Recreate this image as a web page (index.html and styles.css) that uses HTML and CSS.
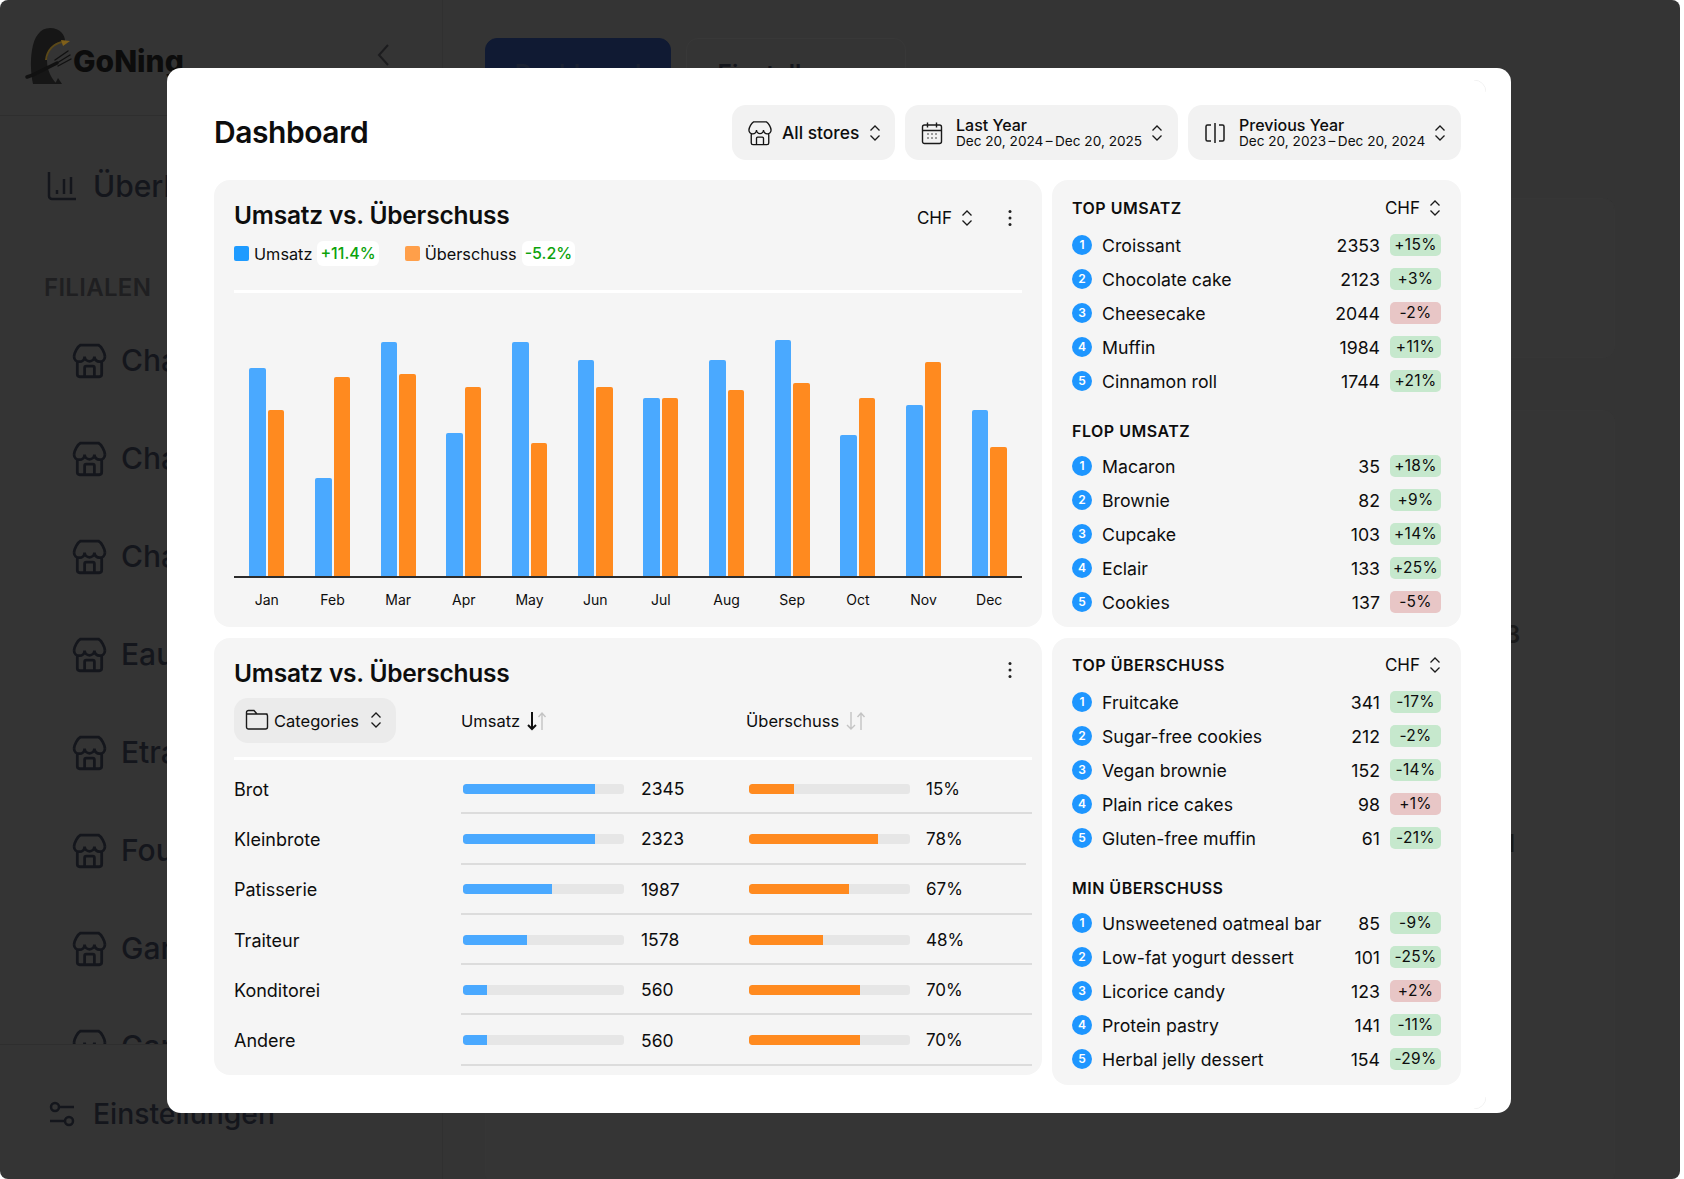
FILE: index.html
```html
<!DOCTYPE html>
<html lang="de">
<head>
<meta charset="utf-8">
<title>GoNing Dashboard</title>
<link rel="stylesheet" href="styles.css">
</head>
<body>
<svg class="defs" width="0" height="0" aria-hidden="true">
  <symbol id="store" viewBox="0 0 24 24"><path d="M2.5 9.5C2.7 7 4.6 3.5 6.5 2.5h11c1.900 1 3.800 4.500 4 7M2.500 9.500a3.170 3.170 0 0 0 6.500 0a3 3 0 0 0 6 0a3.170 3.170 0 0 0 6.500 0M4.500 13v7.500a1.500 1.500 0 0 0 1.500 1.500h12a1.500 1.500 0 0 0 1.500-1.500V13M9 22v-5.500a1 1 0 0 1 1-1h4a1 1 0 0 1 1 1V22"/></symbol>
  <symbol id="updown" viewBox="0 0 12 20"><path d="M1.500 7.500L6 3l4.500 4.500M1.500 12.500L6 17l4.500-4.500"/></symbol>
  <symbol id="dots" viewBox="0 0 6 20"><circle cx="3" cy="3.500" r="1.500"/><circle cx="3" cy="10" r="1.500"/><circle cx="3" cy="16.500" r="1.500"/></symbol>
</svg>

<div class="app">
  <aside class="sidebar">
    <div class="brand">
      <svg class="penguin" viewBox="0 0 50 56" width="50" height="56" aria-hidden="true">
        <path class="pg-body" d="M27 0C37 0 42 7 42 13C33 13 24 20 24 32C24 42 28 50 34 56H10C8 46 7 34 9 22C11 9 17 0 27 0Z"/>
        <path class="pg-tan" d="M40 14C31 15 24 22 23 32"/>
        <path class="pg-beak" d="M38 12L47 13L40 18Z"/>
        <path class="pg-fork" d="M4 49L10 47L34 35"/>
        <path class="pg-tines" d="M34 35L47 27M35 38L48 31M32 32L45 23"/>
        <path class="pg-foot" d="M35 50L39 56H32Z"/>
      </svg>
      <span class="brand-name">GoNing</span>
      <svg class="collapse" viewBox="0 0 14 24" width="14" height="24" aria-hidden="true"><path d="M12 2L3 12l9 10"/></svg>
    </div>
    <nav class="nav">
      <div class="nav-top">
        <svg class="nav-chart" viewBox="0 0 30 30" width="30" height="30" aria-hidden="true"><path d="M2 1v24a3 3 0 0 0 3 3h24M10 19v4M17 8v15M24 6v17"/></svg>
        <span>Überblick</span>
      </div>
      <div class="nav-label">FILIALEN</div>
      <div class="nav-item"><svg class="ico-store"><use href="#store"/></svg><span>Chalet</span></div>
      <div class="nav-item"><svg class="ico-store"><use href="#store"/></svg><span>Chalet</span></div>
      <div class="nav-item"><svg class="ico-store"><use href="#store"/></svg><span>Chalet</span></div>
      <div class="nav-item"><svg class="ico-store"><use href="#store"/></svg><span>Eaux</span></div>
      <div class="nav-item"><svg class="ico-store"><use href="#store"/></svg><span>Etrat</span></div>
      <div class="nav-item"><svg class="ico-store"><use href="#store"/></svg><span>Foug</span></div>
      <div class="nav-item"><svg class="ico-store"><use href="#store"/></svg><span>Gare</span></div>
      <div class="nav-item"><svg class="ico-store"><use href="#store"/></svg><span>Gare</span></div>
    </nav>
    <div class="side-foot">
      <svg class="foot-ico" viewBox="0 0 28 28" width="28" height="28" aria-hidden="true"><circle cx="7" cy="7" r="4"/><path d="M11 7h15M2 21h15"/><circle cx="21" cy="21" r="4"/></svg>
      <span>Einstellungen</span>
    </div>
  </aside>

  <main class="back">
    <div class="tabs">
      <div class="tab tab-on">Dashboard</div>
      <div class="tab">Einstellungen</div>
    </div>
    <div class="back-panel back-panel-a"></div>
    <div class="back-panel back-panel-b"><span class="back-num">3</span><span class="back-num">1</span></div>
  </main>
</div>

<section class="modal">
  <svg class="corner corner-t" viewBox="0 0 12 12" width="12" height="12" aria-hidden="true"><path d="M0 0a12 12 0 0 1 12 12"/></svg>
  <svg class="corner corner-b" viewBox="0 0 12 12" width="12" height="12" aria-hidden="true"><path d="M12 0a12 12 0 0 1-12 12"/></svg>

  <header class="modal-head">
    <h1 class="modal-title">Dashboard</h1>
    <div class="filters">
      <button class="pill pill-store">
        <svg class="ico-head"><use href="#store"/></svg>
        <span class="pill-one">All stores</span>
        <svg class="ico-ud"><use href="#updown"/></svg>
      </button>
      <button class="pill pill-range">
        <svg class="ico-cal" viewBox="0 0 22 24" aria-hidden="true"><rect x="1.500" y="4" width="19" height="18.500" rx="2"/><path class="thin" d="M1.500 9.500h19M6.500 1.500v5M15.500 1.500v5"/><path class="dotted" d="M7 13h.01M11 13h.01M15 13h.01M7 17h.01M11 17h.01M15 17h.01"/></svg>
        <span class="pill-two"><b>Last Year</b><small>Dec 20, 2024&thinsp;–&thinsp;Dec 20, 2025</small></span>
        <svg class="ico-ud"><use href="#updown"/></svg>
      </button>
      <button class="pill pill-range">
        <svg class="ico-cmp" viewBox="0 0 22 24" aria-hidden="true"><path d="M7 4H3.500a1.500 1.500 0 0 0-1.500 1.500v13A1.500 1.500 0 0 0 3.500 20H7M15 4h3.500A1.500 1.500 0 0 1 20 5.500v13a1.500 1.500 0 0 1-1.500 1.500H15M11 2v20"/></svg>
        <span class="pill-two"><b>Previous Year</b><small>Dec 20, 2023&thinsp;–&thinsp;Dec 20, 2024</small></span>
        <svg class="ico-ud"><use href="#updown"/></svg>
      </button>
    </div>
  </header>

  <div class="grid">
    <div class="col-left">
      <article class="card card-chart">
        <div class="card-top">
          <h2 class="card-title">Umsatz vs. Überschuss</h2>
          <div class="card-tools">
            <span class="chf">CHF <svg class="ico-ud"><use href="#updown"/></svg></span>
            <svg class="ico-dots"><use href="#dots"/></svg>
          </div>
        </div>
        <div class="legend">
          <span class="swatch swatch-b"></span><span>Umsatz</span><span class="delta">+11.4%</span>
          <span class="swatch swatch-o"></span><span>Überschuss</span><span class="delta">-5.2%</span>
        </div>
        <div class="chart" id="chart">
          <div class="group"><i class="bar b" style="height:208px"></i><i class="bar o" style="height:166px"></i></div>
          <div class="group"><i class="bar b" style="height:98px"></i><i class="bar o" style="height:199px"></i></div>
          <div class="group"><i class="bar b" style="height:234px"></i><i class="bar o" style="height:202px"></i></div>
          <div class="group"><i class="bar b" style="height:143px"></i><i class="bar o" style="height:189px"></i></div>
          <div class="group"><i class="bar b" style="height:234px"></i><i class="bar o" style="height:133px"></i></div>
          <div class="group"><i class="bar b" style="height:216px"></i><i class="bar o" style="height:189px"></i></div>
          <div class="group"><i class="bar b" style="height:178px"></i><i class="bar o" style="height:178px"></i></div>
          <div class="group"><i class="bar b" style="height:216px"></i><i class="bar o" style="height:186px"></i></div>
          <div class="group"><i class="bar b" style="height:236px"></i><i class="bar o" style="height:193px"></i></div>
          <div class="group"><i class="bar b" style="height:141px"></i><i class="bar o" style="height:178px"></i></div>
          <div class="group"><i class="bar b" style="height:171px"></i><i class="bar o" style="height:214px"></i></div>
          <div class="group"><i class="bar b" style="height:166px"></i><i class="bar o" style="height:129px"></i></div>
        </div>
        <div class="months">
          <span>Jan</span><span>Feb</span><span>Mar</span><span>Apr</span><span>May</span><span>Jun</span><span>Jul</span><span>Aug</span><span>Sep</span><span>Oct</span><span>Nov</span><span>Dec</span>
        </div>
      </article>

      <article class="card card-table">
        <div class="card-top card-top-table">
          <h2 class="card-title">Umsatz vs. Überschuss</h2>
          <svg class="ico-dots"><use href="#dots"/></svg>
        </div>
        <div class="t-head">
          <div class="t-first">
            <button class="pill-cat">
              <svg class="ico-folder" viewBox="0 0 24 22" aria-hidden="true"><path d="M1.500 5V3.500A2 2 0 0 1 3.500 1.500h5.500l3 3.500h8.500a2 2 0 0 1 2 2v11a2 2 0 0 1-2 2h-17a2 2 0 0 1-2-2V5h21"/></svg>
              <span>Categories</span>
              <svg class="ico-ud"><use href="#updown"/></svg>
            </button>
          </div>
          <div class="t-col">Umsatz
            <svg class="ico-sort" viewBox="0 0 20 20" aria-hidden="true"><path class="arrow-on" d="M5 1v17M1 14l4 4 4-4"/><path class="arrow-off" d="M15 19V2M11.500 6L15 2l3.500 4"/></svg>
          </div>
          <div class="t-col">Überschuss
            <svg class="ico-sort" viewBox="0 0 20 20" aria-hidden="true"><path class="arrow-off" d="M5 1v17M1 14l4 4 4-4"/><path class="arrow-off" d="M15 19V2M11.500 6L15 2l3.500 4"/></svg>
          </div>
        </div>
        <div class="t-rows">
        <div class="t-row"><div class="t-first">Brot</div><div class="t-cells">
          <div class="t-cell"><div class="track"><div class="fill b" style="width:82%"></div></div><span>2345</span></div>
          <div class="t-cell"><div class="track"><div class="fill o" style="width:28%"></div></div><span>15%</span></div></div></div>
        <div class="t-row t-row-short"><div class="t-first">Kleinbrote</div><div class="t-cells">
          <div class="t-cell"><div class="track"><div class="fill b" style="width:82%"></div></div><span>2323</span></div>
          <div class="t-cell"><div class="track"><div class="fill o" style="width:80%"></div></div><span>78%</span></div></div></div>
        <div class="t-row"><div class="t-first">Patisserie</div><div class="t-cells">
          <div class="t-cell"><div class="track"><div class="fill b" style="width:55%"></div></div><span>1987</span></div>
          <div class="t-cell"><div class="track"><div class="fill o" style="width:62%"></div></div><span>67%</span></div></div></div>
        <div class="t-row"><div class="t-first">Traiteur</div><div class="t-cells">
          <div class="t-cell"><div class="track"><div class="fill b" style="width:40%"></div></div><span>1578</span></div>
          <div class="t-cell"><div class="track"><div class="fill o" style="width:46%"></div></div><span>48%</span></div></div></div>
        <div class="t-row"><div class="t-first">Konditorei</div><div class="t-cells">
          <div class="t-cell"><div class="track"><div class="fill b" style="width:15%"></div></div><span>560</span></div>
          <div class="t-cell"><div class="track"><div class="fill o" style="width:69%"></div></div><span>70%</span></div></div></div>
        <div class="t-row"><div class="t-first">Andere</div><div class="t-cells">
          <div class="t-cell"><div class="track"><div class="fill b" style="width:15%"></div></div><span>560</span></div>
          <div class="t-cell"><div class="track"><div class="fill o" style="width:69%"></div></div><span>70%</span></div></div></div>
        </div>
      </article>
    </div>

    <div class="col-right">
      <article class="card card-list card-list-a">
        <div class="l-head"><h3>TOP UMSATZ</h3><span class="chf">CHF <svg class="ico-ud"><use href="#updown"/></svg></span></div>
        <ol class="list">
          <li><span class="rank">1</span><span class="l-name">Croissant</span><span class="l-num">2353</span><span class="tag up">+15%</span></li>
          <li><span class="rank">2</span><span class="l-name">Chocolate cake</span><span class="l-num">2123</span><span class="tag up">+3%</span></li>
          <li><span class="rank">3</span><span class="l-name">Cheesecake</span><span class="l-num">2044</span><span class="tag dn">-2%</span></li>
          <li><span class="rank">4</span><span class="l-name">Muffin</span><span class="l-num">1984</span><span class="tag up">+11%</span></li>
          <li><span class="rank">5</span><span class="l-name">Cinnamon roll</span><span class="l-num">1744</span><span class="tag up">+21%</span></li>
        </ol>
        <div class="l-head l-head-next"><h3>FLOP UMSATZ</h3></div>
        <ol class="list">
          <li><span class="rank">1</span><span class="l-name">Macaron</span><span class="l-num">35</span><span class="tag up">+18%</span></li>
          <li><span class="rank">2</span><span class="l-name">Brownie</span><span class="l-num">82</span><span class="tag up">+9%</span></li>
          <li><span class="rank">3</span><span class="l-name">Cupcake</span><span class="l-num">103</span><span class="tag up">+14%</span></li>
          <li><span class="rank">4</span><span class="l-name">Eclair</span><span class="l-num">133</span><span class="tag up">+25%</span></li>
          <li><span class="rank">5</span><span class="l-name">Cookies</span><span class="l-num">137</span><span class="tag dn">-5%</span></li>
        </ol>
      </article>
      <article class="card card-list card-list-b">
        <div class="l-head"><h3>TOP ÜBERSCHUSS</h3><span class="chf">CHF <svg class="ico-ud"><use href="#updown"/></svg></span></div>
        <ol class="list">
          <li><span class="rank">1</span><span class="l-name">Fruitcake</span><span class="l-num">341</span><span class="tag up">-17%</span></li>
          <li><span class="rank">2</span><span class="l-name">Sugar-free cookies</span><span class="l-num">212</span><span class="tag up">-2%</span></li>
          <li><span class="rank">3</span><span class="l-name">Vegan brownie</span><span class="l-num">152</span><span class="tag up">-14%</span></li>
          <li><span class="rank">4</span><span class="l-name">Plain rice cakes</span><span class="l-num">98</span><span class="tag dn">+1%</span></li>
          <li><span class="rank">5</span><span class="l-name">Gluten-free muffin</span><span class="l-num">61</span><span class="tag up">-21%</span></li>
        </ol>
        <div class="l-head l-head-next"><h3>MIN ÜBERSCHUSS</h3></div>
        <ol class="list">
          <li><span class="rank">1</span><span class="l-name">Unsweetened oatmeal bar</span><span class="l-num">85</span><span class="tag up">-9%</span></li>
          <li><span class="rank">2</span><span class="l-name">Low-fat yogurt dessert</span><span class="l-num">101</span><span class="tag up">-25%</span></li>
          <li><span class="rank">3</span><span class="l-name">Licorice candy</span><span class="l-num">123</span><span class="tag dn">+2%</span></li>
          <li><span class="rank">4</span><span class="l-name">Protein pastry</span><span class="l-num">141</span><span class="tag up">-11%</span></li>
          <li><span class="rank">5</span><span class="l-name">Herbal jelly dessert</span><span class="l-num">154</span><span class="tag up">-29%</span></li>
        </ol>
      </article>
    </div>
  </div>
</section>
</body>
</html>
```
FILE: styles.css
```css
* { box-sizing: border-box; }
html, body { margin: 0; padding: 0; background: #fff; }
body {
  width: 1684px;
  height: 1179px;
  overflow: hidden;
  position: relative;
  font-family: "Inter", "Liberation Sans", sans-serif;
  color: #0d0d0d;
}
.defs { position: absolute; }
svg { display: block; flex: none; }
h1, h2, h3, ol { margin: 0; padding: 0; }
button { font: inherit; color: inherit; border: 0; }

/* background application */
.app {
  width: 1680px;
  height: 1179px;
  display: flex;
  background: #343434;
  border-radius: 8px;
  overflow: hidden;
  color: #14161c;
}
.sidebar {
  width: 443px;
  flex: none;
  display: flex;
  flex-direction: column;
  border-right: 1px solid #303030;
}
.brand {
  height: 116px;
  flex: none;
  display: flex;
  align-items: flex-start;
  padding: 28px 0 0 23px;
  border-bottom: 1px solid #2e2e2e;
}
.penguin { margin-right: 0; }
.pg-body { fill: #161616; }
.pg-tan { fill: none; stroke: #5a4818; stroke-width: 2; }
.pg-beak { fill: #80601a; }
.pg-fork { fill: none; stroke: #111; stroke-width: 3.500; stroke-linecap: round; }
.pg-tines { fill: none; stroke: #111; stroke-width: 1.400; stroke-linecap: round; }
.pg-foot { fill: #161616; }
.brand-name {
  font-size: 30px;
  font-weight: 800;
  line-height: 34px;
  margin-top: 16px;
  color: #0c0c0c;
}
.collapse { margin: 15px 0 0 192px; fill: none; stroke: #1c1c1e; stroke-width: 2; }
.nav { flex: 1; overflow: hidden; padding-top: 48px; }
.nav-top {
  display: flex;
  align-items: center;
  gap: 16px;
  padding-left: 47px;
  font-size: 30px;
  font-weight: 500;
  height: 44px;
}
.nav-chart { fill: none; stroke: #14161c; stroke-width: 2.500; }
.nav-label {
  margin: 64px 0 0 44px;
  font-size: 24px;
  font-weight: 600;
  color: #1f1f21;
  line-height: 32px;
  letter-spacing: .3px;
}
.nav-item {
  display: flex;
  align-items: center;
  gap: 12px;
  height: 98px;
  padding-left: 70px;
  font-size: 30px;
  font-weight: 500;
}
.nav-label + .nav-item { margin-top: 7px; }
.ico-store { width: 39px; height: 39px; fill: none; stroke: #14161c; stroke-width: 1.700; }
.side-foot {
  height: 135px;
  flex: none;
  display: flex;
  align-items: center;
  gap: 17px;
  padding: 4px 0 0 48px;
  border-top: 1px solid #2e2e2e;
  font-size: 28.300px;
  font-weight: 500;
}
.foot-ico { fill: none; stroke: #14161c; stroke-width: 2.500; }
.back { flex: 1; padding: 38px 0 0 42px; position: relative; }
.tabs { display: flex; gap: 15px; }
.tab {
  width: 220px;
  height: 60px;
  padding-top: 20px;
  text-align: center;
  font-size: 24px;
  font-weight: 600;
  border: 1px solid #383838;
  border-radius: 12px 12px 0 0;
}
.tab-on { width: 186px; background: #101a33; border-color: #101a33; color: #1a2132; }
.back-panel {
  width: 1130px;
  border: 1px solid #363636;
  border-radius: 12px;
}
.back-panel-a { height: 160px; margin-top: 100px; background: #353535; }
.back-panel-b {
  height: 775px;
  margin-top: 52px;
  background: #353535;
  position: relative;
}
.back-num { position: absolute; left: 1019px; top: 209px; font-size: 24px; font-weight: 600; color: #1a1a1a; }
.back-num + .back-num { top: 418px; }

/* modal */
.modal {
  position: absolute;
  left: 167px;
  top: 68px;
  width: 1344px;
  height: 1045px;
  background: #fff;
  border-radius: 14px;
  padding: 37px 50px 0 47px;
}
.corner { position: absolute; fill: none; stroke: #f2f2f2; stroke-width: 1; left: 1307px; }
.corner-t { top: 12px; }
.corner-b { top: 1029px; }
.modal-head { display: flex; align-items: center; justify-content: space-between; height: 55px; }
.modal-title { font-size: 30px; font-weight: 600; letter-spacing: -.45px; line-height: 36px; margin-top: -2px; }
.filters { display: flex; gap: 10px; }
.pill {
  height: 55px;
  display: flex;
  align-items: center;
  background: #f2f2f2;
  border-radius: 14px;
  padding: 0 13px 0 16px;
}
.pill-store { width: 163px; }
.pill-range { width: 273px; }
.pill-one { font-size: 17.400px; font-weight: 500; margin: 0 10px 0 8px; white-space: nowrap; }
.ico-head { width: 28px; height: 28px; margin-left: -2px; fill: none; stroke: #141414; stroke-width: 1.150; }
.ico-ud { width: 12px; height: 20px; fill: none; stroke: #1a1a1a; stroke-width: 1.300; }
.ico-cal { width: 22px; height: 24px; fill: none; stroke: #1a1a1a; stroke-width: 1.400; }
.ico-cal .dotted { stroke-linecap: round; stroke-width: 1.500; }
.ico-cmp { width: 22px; height: 24px; fill: none; stroke: #1a1a1a; stroke-width: 1.500; }
.pill-two { display: flex; flex-direction: column; margin: 0 9px 0 13px; text-align: left; white-space: nowrap; }
.pill-two b { font-size: 16px; font-weight: 500; line-height: 17px; }
.pill-two small { font-size: 13.600px; font-weight: 400; line-height: 15px; }

.grid { display: flex; gap: 10px; margin-top: 20px; }
.col-left { width: 828px; display: flex; flex-direction: column; gap: 11px; }
.col-right { width: 409px; display: flex; flex-direction: column; gap: 11px; }
.card { background: #f5f5f5; border-radius: 16px; }

.card-chart { height: 447px; padding: 20px 20px 0 20px; }
.card-top { display: flex; justify-content: space-between; align-items: flex-start; }
.card-title { font-size: 24.500px; font-weight: 600; line-height: 30px; letter-spacing: -.2px; }
.card-tools { display: flex; align-items: center; gap: 34px; margin: 8px 9px 0 0; }
.chf { display: inline-flex; align-items: center; gap: 9px; font-size: 17px; }
.ico-dots { width: 6px; height: 20px; fill: #222; }
.legend { display: flex; align-items: center; height: 25px; margin-top: 11px; font-size: 16.300px; }
.swatch { width: 15px; height: 15px; border-radius: 2px; margin-right: 5px; }
.swatch-b { background: #1e9bff; }
.swatch-o { background: #ff9f4a; margin-left: 26px; }
.delta { background: #fff; color: #0ca30c; font-size: 16px; font-weight: 500; border-radius: 6px; padding: 0 3px; margin-left: 5px; line-height: 25px; }
.chart {
  height: 288px;
  margin-top: 24px;
  display: flex;
  align-items: flex-end;
  border-top: 3px solid #fff;
  border-bottom: 2px solid #2c2c2c;
}
.group { flex: 1; display: flex; justify-content: center; align-items: flex-end; gap: 2px; }
.bar { display: block; width: 16.500px; border-radius: 2px 2px 0 0; }
.bar.b { background: #4aa9ff; }
.bar.o { background: #ff8a1f; }
.months { display: flex; margin-top: 13px; font-size: 14px; }
.months span { flex: 1; text-align: center; line-height: 17px; }

.card-table { height: 437px; padding: 20px 10px 0 20px; }
.card-top-table { padding-right: 19px; }
.card-top-table .ico-dots { margin-top: 2px; }
.t-head {
  display: flex;
  align-items: center;
  height: 62px;
  margin-top: 10px;
  padding-bottom: 15px;
  border-bottom: 3px solid #fff;
  font-size: 16.500px;
}
.t-first { width: 227px; flex: none; font-size: 18px; }
.pill-cat {
  width: 162px;
  height: 45px;
  display: flex;
  align-items: center;
  background: #ebebeb;
  border-radius: 14px;
  padding: 0 13px 0 11px;
  font-size: 16.500px;
}
.pill-cat span { margin: 1px 11px 0 5px; }
.ico-folder { width: 24px; height: 22px; fill: none; stroke: #1a1a1a; stroke-width: 1.400; }
.t-col { width: 285px; display: flex; align-items: center; gap: 7px; padding-top: 1px; }
.t-col:last-child { width: auto; }
.ico-sort { width: 20px; height: 20px; fill: none; stroke-width: 1.400; }
.arrow-on { stroke: #111; stroke-width: 2; }
.arrow-off { stroke: #c4c4c4; }
.t-rows { padding-top: 4px; }
.t-row { display: flex; align-items: center; height: 50.300px; }
.t-cells {
  flex: 1;
  align-self: stretch;
  display: grid;
  grid-template-columns: 286px 1fr;
  align-items: center;
  border-bottom: 2px solid #dcdcdc;
}
.t-row-short .t-cells { margin-right: 6px; }
.t-cell { display: flex; align-items: center; gap: 17px; padding: 1px 0 0 2px; font-size: 17.500px; }
.t-cell + .t-cell { font-size: 17px; gap: 16px; }
.track { width: 161px; height: 10px; background: #e6e6e6; border-radius: 3px; overflow: hidden; }
.fill { height: 100%; border-radius: 3px 0 0 3px; }
.fill.b { background: #4aa9ff; }
.fill.o { background: #ff8a1f; }

.card-list { padding: 18px 20px 0 20px; }
.card-list-a { height: 447px; }
.card-list-b { height: 447px; padding-top: 17px; }
.l-head { display: flex; justify-content: space-between; align-items: center; height: 20px; margin-bottom: 10px; }
.l-head h3 { font-size: 16px; font-weight: 600; letter-spacing: .5px; }
.l-head-next { margin-top: 23px; margin-bottom: 8px; }
.list { list-style: none; }
.list li { display: flex; align-items: center; height: 34px; }
.rank {
  width: 20px;
  height: 20px;
  flex: none;
  border-radius: 50%;
  background: #1e96ff;
  color: #fff;
  font-size: 12px;
  font-weight: 600;
  line-height: 20px;
  text-align: center;
}
.l-name { flex: 1; margin-left: 10px; font-size: 17.700px; white-space: nowrap; }
.l-num { font-size: 17.700px; margin-right: 10px; }
.tag { width: 51px; height: 22px; line-height: 22px; border-radius: 5px; text-align: center; font-size: 15.500px; letter-spacing: .3px; }
.tag.up { background: #c6e8cd; }
.tag.dn { background: #e8c6c6; }
```
